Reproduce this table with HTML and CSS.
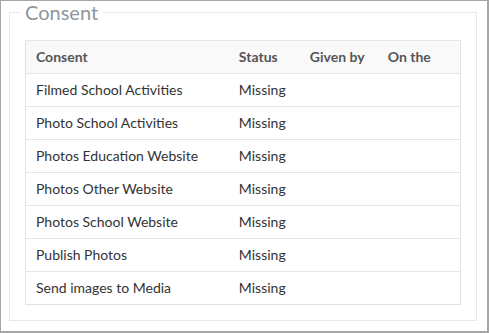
FILE: index.html
```html
<!DOCTYPE html>
<html>
<head>
<meta charset="utf-8">
<link rel="stylesheet" href="styles.css">
</head>
<body>
<div class="frame">
  <fieldset class="panel">
    <legend class="panel-title">Consent</legend>
    <table class="consent-table">
      <colgroup>
        <col class="c-name"><col class="c-status"><col class="c-given"><col class="c-on">
      </colgroup>
      <thead>
        <tr><th>Consent</th><th>Status</th><th>Given by</th><th>On the</th></tr>
      </thead>
      <tbody>
        <tr><td>Filmed School Activities</td><td>Missing</td><td></td><td></td></tr>
        <tr><td>Photo School Activities</td><td>Missing</td><td></td><td></td></tr>
        <tr><td>Photos Education Website</td><td>Missing</td><td></td><td></td></tr>
        <tr><td>Photos Other Website</td><td>Missing</td><td></td><td></td></tr>
        <tr><td>Photos School Website</td><td>Missing</td><td></td><td></td></tr>
        <tr><td>Publish Photos</td><td>Missing</td><td></td><td></td></tr>
        <tr><td>Send images to Media</td><td>Missing</td><td></td><td></td></tr>
      </tbody>
    </table>
  </fieldset>
</div>
</body>
</html>
```
FILE: styles.css
```css
html, body {
  margin: 0;
  padding: 0;
  background: #fff;
}
.frame {
  box-sizing: border-box;
  width: 489px;
  height: 333px;
  border: 2px solid #a6a6a6;
  border-top-width: 1px;
  border-left-width: 1px;
  padding: 1px 10px 0 8px;
  font-family: Lato, "Open Sans", sans-serif;
}
.panel {
  margin: 0;
  border: 1px solid #e6e8ea;
  padding: 18px 15px 15px 15px;
}
.panel-title {
  font-size: 20px;
  line-height: 20px;
  color: #8d959c;
  padding: 0 5px;
  margin-left: -5px;
}
.consent-table {
  width: 436px;
  border-collapse: collapse;
  border: 1px solid #dde3ea;
  font-size: 14px;
  color: #333;
}
.c-name { width: 204px; }
.c-status { width: 71px; }
.c-given { width: 78px; }
.c-on { width: 83px; }
.consent-table th,
.consent-table td {
  height: 33px;
  box-sizing: border-box;
  padding: 0 10px 2px 10px;
  text-align: left;
  border-top: 1px solid #e2e7ec;
  vertical-align: middle;
}
.consent-table th {
  background: #f9f9f9;
  font-weight: bold;
  color: #555;
}
```
